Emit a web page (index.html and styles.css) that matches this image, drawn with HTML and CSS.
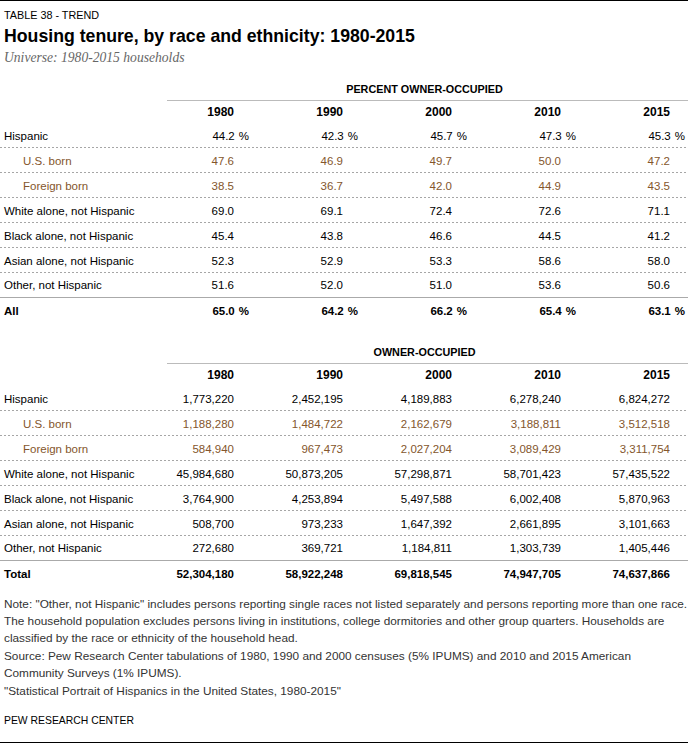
FILE: index.html
```html
<!DOCTYPE html>
<html lang="en">
<head>
<meta charset="utf-8">
<title>Housing tenure, by race and ethnicity: 1980-2015</title>
<link rel="stylesheet" href="styles.css">
</head>
<body>
<div class="page">
  <header class="head">
    <div class="kicker">TABLE 38 - TREND</div>
    <h1 class="title">Housing tenure, by race and ethnicity: 1980-2015</h1>
    <div class="subtitle">Universe: 1980-2015 households</div>
  </header>

  <section class="tbl tbl-pct">
    <div class="group"><div class="group-label">PERCENT OWNER-OCCUPIED</div></div>
    <div class="row years"><div class="label"></div><div class="v">1980</div><div class="v">1990</div><div class="v">2000</div><div class="v">2010</div><div class="v">2015</div></div>
    <div class="row dot"><div class="label">Hispanic</div><div class="v">44.2<span class="pct">%</span></div><div class="v">42.3<span class="pct">%</span></div><div class="v">45.7<span class="pct">%</span></div><div class="v">47.3<span class="pct">%</span></div><div class="v">45.3<span class="pct">%</span></div></div>
    <div class="row dot sub"><div class="label">U.S. born</div><div class="v">47.6</div><div class="v">46.9</div><div class="v">49.7</div><div class="v">50.0</div><div class="v">47.2</div></div>
    <div class="row dot sub"><div class="label">Foreign born</div><div class="v">38.5</div><div class="v">36.7</div><div class="v">42.0</div><div class="v">44.9</div><div class="v">43.5</div></div>
    <div class="row dot"><div class="label">White alone, not Hispanic</div><div class="v">69.0</div><div class="v">69.1</div><div class="v">72.4</div><div class="v">72.6</div><div class="v">71.1</div></div>
    <div class="row dot"><div class="label">Black alone, not Hispanic</div><div class="v">45.4</div><div class="v">43.8</div><div class="v">46.6</div><div class="v">44.5</div><div class="v">41.2</div></div>
    <div class="row dot"><div class="label">Asian alone, not Hispanic</div><div class="v">52.3</div><div class="v">52.9</div><div class="v">53.3</div><div class="v">58.6</div><div class="v">58.0</div></div>
    <div class="row solid"><div class="label">Other, not Hispanic</div><div class="v">51.6</div><div class="v">52.0</div><div class="v">51.0</div><div class="v">53.6</div><div class="v">50.6</div></div>
    <div class="row total"><div class="label">All</div><div class="v">65.0<span class="pct">%</span></div><div class="v">64.2<span class="pct">%</span></div><div class="v">66.2<span class="pct">%</span></div><div class="v">65.4<span class="pct">%</span></div><div class="v">63.1<span class="pct">%</span></div></div>
  </section>

  <section class="tbl tbl-num">
    <div class="group"><div class="group-label">OWNER-OCCUPIED</div></div>
    <div class="row years"><div class="label"></div><div class="v">1980</div><div class="v">1990</div><div class="v">2000</div><div class="v">2010</div><div class="v">2015</div></div>
    <div class="row dot"><div class="label">Hispanic</div><div class="v">1,773,220</div><div class="v">2,452,195</div><div class="v">4,189,883</div><div class="v">6,278,240</div><div class="v">6,824,272</div></div>
    <div class="row dot sub"><div class="label">U.S. born</div><div class="v">1,188,280</div><div class="v">1,484,722</div><div class="v">2,162,679</div><div class="v">3,188,811</div><div class="v">3,512,518</div></div>
    <div class="row dot sub"><div class="label">Foreign born</div><div class="v">584,940</div><div class="v">967,473</div><div class="v">2,027,204</div><div class="v">3,089,429</div><div class="v">3,311,754</div></div>
    <div class="row dot"><div class="label">White alone, not Hispanic</div><div class="v">45,984,680</div><div class="v">50,873,205</div><div class="v">57,298,871</div><div class="v">58,701,423</div><div class="v">57,435,522</div></div>
    <div class="row dot"><div class="label">Black alone, not Hispanic</div><div class="v">3,764,900</div><div class="v">4,253,894</div><div class="v">5,497,588</div><div class="v">6,002,408</div><div class="v">5,870,963</div></div>
    <div class="row dot"><div class="label">Asian alone, not Hispanic</div><div class="v">508,700</div><div class="v">973,233</div><div class="v">1,647,392</div><div class="v">2,661,895</div><div class="v">3,101,663</div></div>
    <div class="row solid"><div class="label">Other, not Hispanic</div><div class="v">272,680</div><div class="v">369,721</div><div class="v">1,184,811</div><div class="v">1,303,739</div><div class="v">1,405,446</div></div>
    <div class="row total"><div class="label">Total</div><div class="v">52,304,180</div><div class="v">58,922,248</div><div class="v">69,818,545</div><div class="v">74,947,705</div><div class="v">74,637,866</div></div>
  </section>

  <footer class="foot">
    <p class="note">Note: "Other, not Hispanic" includes persons reporting single races not listed separately and persons reporting more than one race.<br>The household population excludes persons living in institutions, college dormitories and other group quarters. Households are<br>classified by the race or ethnicity of the household head.</p>
    <p class="note">Source: Pew Research Center tabulations of 1980, 1990 and 2000 censuses (5% IPUMS) and 2010 and 2015 American<br>Community Surveys (1% IPUMS).</p>
    <p class="note">"Statistical Portrait of Hispanics in the United States, 1980-2015"</p>
    <p class="brand">PEW RESEARCH CENTER</p>
  </footer>
</div>
</body>
</html>
```

FILE: styles.css
```css
* { box-sizing: border-box; }

html, body {
  margin: 0;
  padding: 0;
  background: #fff;
}

body {
  font-family: "Liberation Sans", Arial, sans-serif;
  color: #000;
}

.page {
  width: 688px;
  height: 743px;
  border-top: 1px solid #000;
  border-bottom: 1px solid #000;
  display: flex;
  flex-direction: column;
}

.head {
  padding: 0 4px;
}

.kicker {
  font-size: 10.8px;
  line-height: 14px;
  margin-top: 7px;
  color: #000;
}

.title {
  margin: 0;
  font-size: 17.7px;
  line-height: 22px;
  font-weight: bold;
  margin-top: 3px;
}

.subtitle {
  font-family: "Liberation Serif", "Times New Roman", serif;
  font-style: italic;
  font-size: 13.6px;
  line-height: 17px;
  color: #666;
  margin-top: 2px;
}

.tbl {
  display: flex;
  flex-direction: column;
}

.tbl-pct { margin-top: 12px; }
.tbl-num { margin-top: 18px; }

.group {
  display: grid;
  grid-template-columns: 167px 1fr;
}

.group-label {
  grid-column: 2;
  height: 23px;
  line-height: 22px;
  text-align: center;
  font-size: 10.8px;
  font-weight: bold;
  border-bottom: 1px solid #bbb;
  padding-right: 6px;
}

.row {
  display: grid;
  grid-template-columns: 143px repeat(5, 109px);
  align-items: center;
  height: 25px;
  font-size: 11.5px;
}

.row.years {
  height: 22px;
  font-size: 12px;
  font-weight: bold;
}

.row.dot {
  background-image: linear-gradient(to right, #a6a6a6 50%, transparent 50%);
  background-size: 4px 1px;
  background-repeat: repeat-x;
  background-position: left bottom;
}

.row.solid {
  border-bottom: 1px solid #aaa;
}

.row.total {
  font-weight: bold;
}

.label {
  padding-left: 4px;
  white-space: nowrap;
}

.row.sub {
  color: #84562c;
}

.row.sub .label {
  padding-left: 23px;
}

.v {
  text-align: right;
  padding-right: 18px;
  white-space: nowrap;
}

.pct {
  margin-left: 4px;
  margin-right: -15px;
}

.foot {
  margin-top: 10px;
  padding: 0 4px;
}

.note {
  margin: 0 0 1px;
  font-size: 11.8px;
  line-height: 17px;
  color: #333;
  white-space: nowrap;
}

.brand {
  margin: 12px 0 0;
  font-size: 10.4px;
  line-height: 17px;
  color: #000;
}
```
